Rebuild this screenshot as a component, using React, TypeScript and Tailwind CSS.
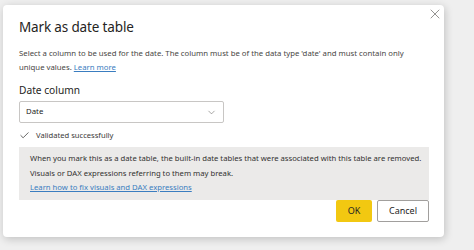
import { ChevronDown, Check, X } from 'lucide-react'

export default function App() {
  return (
    <div className="w-[474px] h-[250px] overflow-hidden bg-[#efefef] pt-[5px] pl-[3px] font-['Noto_Sans',sans-serif]">
      <div className="relative w-[441px] h-[232px] bg-white rounded-[4px] shadow-[1px_2px_9px_rgba(0,0,0,0.2)] pl-[16px] pt-[13px]">
        <button className="absolute left-[424px] top-[1px] text-[#797775]">
          <X size={16} strokeWidth={1.2} />
        </button>

        <h1 className="text-[13.5px] leading-[18px] text-[#252423] tracking-[-0.15px] whitespace-nowrap">Mark as date table</h1>

        {/* description */}
        <div className="mt-[10px] text-[7.75px] leading-[14px] text-[#484644] whitespace-nowrap">
          <div>Select a column to be used for the date. The column must be of the data type 'date' and must contain only</div>
          <div>
            unique values.{' '}
            <a className="text-[#3a7dc0] underline underline-offset-1">Learn more</a>
          </div>
        </div>

        <div className="mt-[9px] text-[10.2px] leading-[14px] text-[#252423]">Date column</div>

        <div className="mt-[4px] w-[205px] h-[22px] border border-[#c8c6c4] rounded-[2px] flex items-center justify-between pl-[6px] pr-[6px]">
          <span className="text-[7.8px] text-[#252423]">Date</span>
          <ChevronDown size={11} strokeWidth={1.2} className="text-[#605e5c]" />
        </div>

        <div className="mt-[6px] h-[12px] flex items-center gap-[6px] text-[7.6px] leading-[12px] text-[#3b3a39]">
          <Check size={11} strokeWidth={1.5} className="text-[#252423]" />
          <span>Validated successfully</span>
        </div>

        <div className="mt-[6px] w-[410px] h-[53px] bg-[#ebeae9] pl-[11px] pt-[4px] text-[7.7px] leading-[14.5px] text-[#323130] whitespace-nowrap">
          <div>When you mark this as a date table, the built-in date tables that were associated with this table are removed.</div>
          <div>Visuals or DAX expressions referring to them may break.</div>
          <a className="text-[#3a7dc0] underline underline-offset-1">Learn how to fix visuals and DAX expressions</a>
        </div>

        <div className="w-[410px] flex justify-end gap-[5px]">
          <button className="w-[36px] h-[22px] bg-[#f2c811] rounded-[2px] text-[9px] text-[#252423]">OK</button>
          <button className="w-[52px] h-[22px] border border-[#a19f9d] rounded-[2px] text-[9px] text-[#252423]">Cancel</button>
        </div>
      </div>
    </div>
  )
}
